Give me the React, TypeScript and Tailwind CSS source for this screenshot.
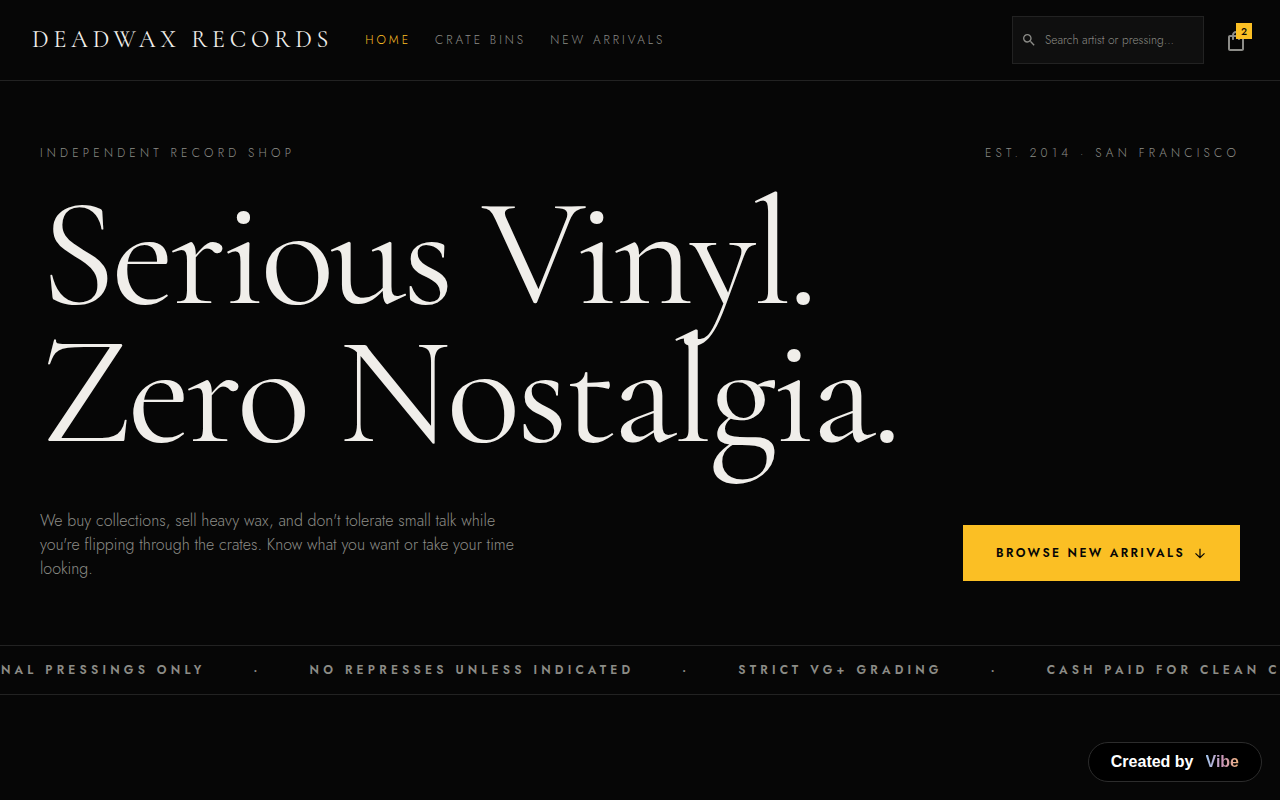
import React, { useState } from "react";

const navLinks = ["Home", "Crate Bins", "New Arrivals"];

const tickerItems = [
  "Original pressings only",
  "No represses unless indicated",
  "Strict VG+ grading",
  "Cash paid for clean collections",
];

function SearchIcon() {
  return (
    <svg viewBox="0 0 24 24" className="w-4 h-4 shrink-0 fill-[#8c8c88]" aria-hidden="true">
      <path d="M15.5 14h-.79l-.28-.27A6.47 6.47 0 0 0 16 9.5 6.5 6.5 0 1 0 9.5 16c1.61 0 3.09-.59 4.23-1.57l.27.28v.79l5 4.99L20.49 19l-4.99-5zm-6 0C7.01 14 5 11.99 5 9.5S7.01 5 9.5 5 14 7.01 14 9.5 11.99 14 9.5 14z" />
    </svg>
  );
}

function BagIcon() {
  return (
    <svg viewBox="0 0 24 24" className="w-6 h-6 fill-[#8c8c88]" aria-hidden="true">
      <path d="M18 6h-2c0-2.21-1.79-4-4-4S8 3.79 8 6H6c-1.1 0-2 .9-2 2v12c0 1.1.9 2 2 2h12c1.1 0 2-.9 2-2V8c0-1.1-.9-2-2-2zm-6-2c1.1 0 2 .9 2 2h-4c0-1.1.9-2 2-2zm6 16H6V8h2v2c0 .55.45 1 1 1s1-.45 1-1V8h4v2c0 .55.45 1 1 1s1-.45 1-1V8h2v12z" />
    </svg>
  );
}

function Header() {
  const [active, setActive] = useState("Home");
  const [query, setQuery] = useState("");

  return (
    <header className="flex items-center justify-between px-8 py-4 border-b border-[#222222]">
      <div className="flex items-center gap-8">
        <a href="#" className="font-['Cormorant_Garamond','Liberation_Serif',serif] text-2xl leading-8 tracking-[0.2em] uppercase whitespace-nowrap">
          Deadwax Records
        </a>
        <nav className="flex gap-6">
          {navLinks.map((link) => (
            <a
              key={link}
              href="#"
              onClick={() => setActive(link)}
              className={`text-xs font-light tracking-[0.25em] uppercase whitespace-nowrap ${
                active === link ? "text-[#fbbf24]" : "text-[#8c8c86] hover:text-[#f0eeea]"
              }`}
            >
              {link}
            </a>
          ))}
        </nav>
      </div>
      <div className="flex items-center gap-5">
        <label className="flex items-center gap-2 w-48 h-12 px-2 bg-[#0f0f0f] border border-[#222222]">
          <SearchIcon />
          <input
            type="text"
            aria-label="Search"
            value={query}
            onChange={(e) => setQuery(e.target.value)}
            placeholder="Search artist or pressing..."
            className="w-full min-w-0 bg-transparent text-xs font-light outline-none placeholder:text-[#8c8c86]"
          />
        </label>
        <button type="button" aria-label="Cart" className="relative pt-0.5">
          <BagIcon />
          <span className="absolute -top-1 -right-1 w-4 h-4 flex items-center justify-center bg-[#fbbf24] text-[#060606] text-[10px] font-medium">
            2
          </span>
        </button>
      </div>
    </header>
  );
}

function Hero() {
  return (
    <section className="px-10 py-16">
      <div className="flex justify-between text-xs font-light tracking-[0.35em] uppercase text-[#8c8c86]">
        <span>Independent record shop</span>
        <span>Est. 2014 · San Francisco</span>
      </div>
      <h1 className="mt-6 font-['Cormorant_Garamond','Liberation_Serif',serif] text-[154px] leading-[138px] tracking-[-4px]">
        Serious Vinyl.
        <br />
        Zero Nostalgia.
      </h1>
      <div className="mt-12 flex items-end justify-between gap-8">
        <p className="max-w-[480px] text-base font-light text-[#8c8c86]">
          We buy collections, sell heavy wax, and don't tolerate small talk while you're flipping through the
          crates. Know what you want or take your time looking.
        </p>
        <button
          type="button"
          className="flex items-center gap-2 h-14 px-8 border border-[#fbbf24] bg-[#fbbf24] text-[#060606] text-xs font-semibold tracking-[0.2em] uppercase whitespace-nowrap"
        >
          Browse new arrivals
          <svg viewBox="0 0 14 14" className="w-3.5 h-3.5" fill="none" stroke="currentColor" strokeWidth="1.2" aria-hidden="true">
            <path d="M7 2.8v8.8M2.5 7.4 7 11.7l4.5-4.3" />
          </svg>
        </button>
      </div>
    </section>
  );
}

function Ticker() {
  return (
    <div className="overflow-hidden border-y border-[#222222]">
      <div className="flex items-center gap-12 py-4 -translate-x-[54px] text-xs font-semibold tracking-[0.35em] uppercase whitespace-nowrap text-[#8c8c86]">
        {tickerItems.map((item) => (
          <React.Fragment key={item}>
            <span>{item}</span>
            <span>·</span>
          </React.Fragment>
        ))}
      </div>
    </div>
  );
}

export default function App() {
  return (
    <div className="min-h-screen bg-[#060606] text-[#f0eeea] font-['Jost','Lato',sans-serif]">
      <Header />
      <main>
        <Hero />
        <Ticker />
      </main>
      <a
        href="#"
        className="fixed bottom-[18px] right-[18px] flex items-center gap-3 h-10 px-[22px] rounded-full bg-black border border-[#2c2c2c] font-['Liberation_Sans',sans-serif] text-base font-bold text-white"
      >
        Created by
        <span className="bg-linear-to-r from-[#9fc4ec] via-[#c996b8] to-[#f3b57c] bg-clip-text text-transparent">
          Vibe
        </span>
      </a>
    </div>
  );
}
